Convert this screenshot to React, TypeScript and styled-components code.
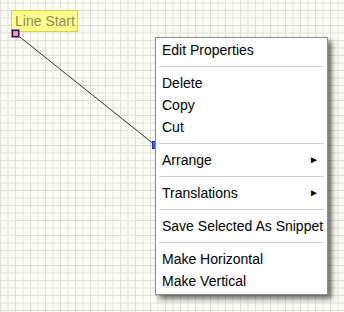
import React from "react";
import styled, { createGlobalStyle } from "styled-components";

const GlobalStyle = createGlobalStyle`
  html, body {
    margin: 0;
    padding: 0;
    width: 100%;
    height: 100%;
    overflow: hidden;
  }
  body {
    font-family: "Liberation Sans", Arial, sans-serif;
  }
`;

type MenuItem =
  | { kind: "item"; label: string; submenu?: boolean }
  | { kind: "separator" };

const menuItems: MenuItem[] = [
  { kind: "item", label: "Edit Properties" },
  { kind: "separator" },
  { kind: "item", label: "Delete" },
  { kind: "item", label: "Copy" },
  { kind: "item", label: "Cut" },
  { kind: "separator" },
  { kind: "item", label: "Arrange", submenu: true },
  { kind: "separator" },
  { kind: "item", label: "Translations", submenu: true },
  { kind: "separator" },
  { kind: "item", label: "Save Selected As Snippet" },
  { kind: "separator" },
  { kind: "item", label: "Make Horizontal" },
  { kind: "item", label: "Make Vertical" },
];

const App: React.FC = () => {
  return (
    <>
      <GlobalStyle />
      <Canvas>
        <NodeLabel>Line Start</NodeLabel>

        {/* the connector line and its end handles, drawn over the label */}
        <Wires width="344" height="312">
          <line x1="15.5" y1="33.5" x2="155" y2="145" stroke="#333" strokeWidth="1" />
          <rect x="11" y="29" width="9" height="9" fill="#9a4ad8" opacity="0.7" />
          <rect x="12.5" y="30.5" width="6" height="6" fill="#f2a6a0" stroke="#3e0a66" strokeWidth="1.2" />
          <rect x="152.5" y="141.5" width="4" height="7" fill="#4b5cff" stroke="#2030c0" strokeWidth="1" />
        </Wires>

        <ContextMenu>
          {menuItems.map((item, i) =>
            item.kind === "separator" ? (
              <Separator key={i} />
            ) : (
              <MenuRow key={i}>
                <span>{item.label}</span>
                {item.submenu && <SubArrow>►</SubArrow>}
              </MenuRow>
            )
          )}
        </ContextMenu>
      </Canvas>
    </>
  );
};

const Canvas = styled.div`
  position: relative;
  width: 344px;
  height: 312px;
  overflow: hidden;
  background-color: #fdfdf4;
  background-image: linear-gradient(to right, #dedede 1px, transparent 1px),
    linear-gradient(to bottom, #dedede 1px, transparent 1px);
  background-size: 7.5px 7.5px;
  background-position: 0 2.5px;
`;

const Wires = styled.svg`
  position: absolute;
  left: 0;
  top: 0;
`;

const NodeLabel = styled.div`
  position: absolute;
  left: 11px;
  top: 10px;
  height: 20px;
  padding: 0 2px 0 3px;
  display: flex;
  align-items: center;
  background: #ffff8a;
  border: 1px solid #d4d44a;
  color: #8a8a62;
  font-size: 14px;
  line-height: 1;
  white-space: nowrap;
`;

const ContextMenu = styled.div`
  position: absolute;
  left: 155px;
  top: 37px;
  width: 171px;
  display: flex;
  flex-direction: column;
  padding: 1px 0 2px;
  background: #fff;
  border: 1px solid #8c8c8c;
  box-shadow: 4px 4px 5px rgba(0, 0, 0, 0.55);
  font-family: "Liberation Sans", Arial, sans-serif;
  font-size: 14px;
  color: #000;
`;

const MenuRow = styled.div`
  height: 22px;
  display: flex;
  align-items: center;
  justify-content: space-between;
  padding: 0 8px 0 6px;
  white-space: nowrap;
  cursor: default;
`;

const SubArrow = styled.span`
  font-size: 10px;
  line-height: 1;
`;

const Separator = styled.div`
  height: 1px;
  margin: 5px 3px;
  background: #d2d2d2;
`;

export default App;
